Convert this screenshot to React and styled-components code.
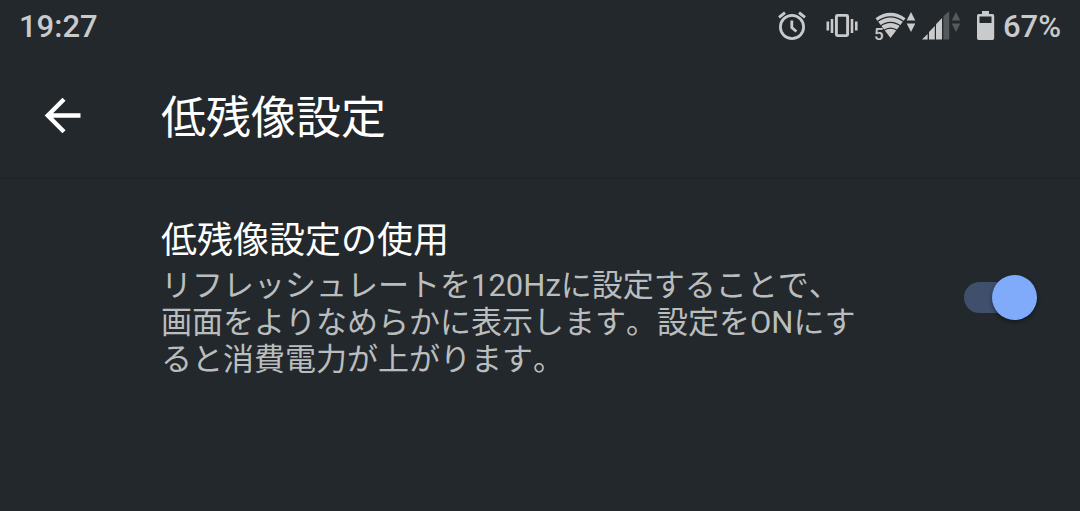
import { useState } from "react";
import styled, { createGlobalStyle } from "styled-components";

const GlobalStyle = createGlobalStyle`
  * {
    box-sizing: border-box;
  }
  body {
    margin: 0;
    background: #23282c;
    color: #fff;
    font-family: Roboto, "Noto Sans CJK JP", sans-serif;
    font-kerning: none;
  }
`;

const StatusBar = styled.div`
  display: flex;
  align-items: center;
  justify-content: space-between;
  height: 52px;
  padding: 0 19px;
  color: #c8cacb;
  font-size: 31px;
  font-weight: 500;
  line-height: 38px;
`;
const StatusText = styled.span`
  padding-top: 2px;
`;
const StatusIcons = styled.div`
  display: flex;
  align-items: center;
  svg {
    display: block;
  }
`;
const Battery = styled(StatusText)`
  margin-left: 8px;
`;

const Header = styled.header`
  display: flex;
  align-items: center;
  height: 127px;
  padding: 0 40px;
  border-bottom: 2px solid #1f2428;
`;
const BackButton = styled.button`
  display: flex;
  align-items: center;
  justify-content: center;
  width: 45px;
  height: 45px;
  margin-right: 76px;
  padding: 0;
  border: 0;
  background: none;
  color: #fff;
  cursor: pointer;
`;
const Title = styled.h1`
  margin: 0;
  padding-top: 8px;
  font-size: 45px;
  font-weight: 400;
  line-height: 54px;
`;

const SettingRow = styled.label`
  display: flex;
  align-items: center;
  gap: 104px;
  padding: 37px 43px 36px 161px;
  cursor: pointer;
`;
const SettingText = styled.span`
  flex: 1;
`;
const SettingTitle = styled.span`
  display: block;
  font-size: 36px;
  line-height: 51px;
`;
const SettingSummary = styled.span`
  display: block;
  color: #babdbe;
  font-size: 31px;
  line-height: 37px;
`;

const Switch = styled.input`
  appearance: none;
  display: grid;
  flex: none;
  align-items: center;
  width: 73px;
  height: 45px;
  margin: 0;
  cursor: pointer;

  &::before,
  &::after {
    content: "";
    grid-area: 1 / 1;
  }
  &::before {
    width: 67px;
    height: 31px;
    border-radius: 16px;
    background: #4a4f53;
  }
  &::after {
    width: 45px;
    height: 45px;
    border-radius: 50%;
    background: #bdc1c6;
    box-shadow: 0 2px 4px rgba(0, 0, 0, 0.4);
  }
  &:checked::before {
    background: #3f4f6c;
  }
  &:checked::after {
    justify-self: end;
    background: #80abfb;
  }
`;

function AlarmIcon() {
  return (
    <svg width="30" height="32" viewBox="777 10 30 32" fill="none" stroke="currentColor">
      <circle cx="792" cy="27" r="11.6" strokeWidth="2.8" />
      <path d="M791.8 20.5v7.2l4.6 3.8" strokeWidth="2.8" />
      <path d="M779 17.4l6-4.8M805 17.4l-6-4.8" strokeWidth="3" />
    </svg>
  );
}

function VibrateIcon() {
  return (
    <svg width="62" height="32" viewBox="807 10 62 32" fill="none" stroke="currentColor">
      <rect x="836.4" y="15.4" width="11.2" height="20.2" rx="1" strokeWidth="2.9" />
      <path d="M827.8 21.5v9M832 19v14M852 19v14M856.3 21.5v9" strokeWidth="2.6" />
    </svg>
  );
}

function WifiIcon() {
  return (
    <svg width="53" height="32" viewBox="869 10 53 32" overflow="visible">
      <path d="M875.5 18.2Q890.5 7.5 905.5 18.2L890.5 38z" fill="currentColor" />
      <g fill="none" stroke="#23282c" strokeWidth="1.2">
        <path d="M877 21.8q13.5-9.8 27 0" />
        <path d="M880 26.2q10.5-7.8 21 0" />
        <path d="M883.5 30.6q7-5 14 0" />
      </g>
      <path d="M873 26.5h8l3.2 5v9h-11.2z" fill="#23282c" />
      <text x="874" y="40" fill="currentColor" fontSize="17" fontWeight="500">
        5
      </text>
      <path d="M911 12l4.3 8.5h-8.6zM911 32l4.3-8.5h-8.6z" fill="currentColor" />
    </svg>
  );
}

function SignalIcon() {
  return (
    <svg width="55" height="32" viewBox="922 10 55 32">
      <g fill="currentColor">
        <path d="M922 39.5l5.6-5.6v5.6z" />
        <path d="M929 39.5v-7.6l5.8-5.9v13.5z" />
        <path d="M936 39.5V24.2l6-6.2v21.5z" />
      </g>
      <g fill="#54595c">
        <path d="M943.4 39.5V16.2l5.8-5v28.3z" />
        <path d="M956 12l4.3 8.5h-8.6zM956 32l4.3-8.5h-8.6z" />
      </g>
    </svg>
  );
}

function BatteryIcon() {
  return (
    <svg width="18" height="32" viewBox="977 10 18 32">
      <path
        d="M982 11h7v3h3.5a1.7 1.7 0 0 1 1.7 1.7v22.6a1.7 1.7 0 0 1-1.7 1.7h-13.8a1.7 1.7 0 0 1-1.7-1.7V15.7a1.7 1.7 0 0 1 1.7-1.7H982z"
        fill="currentColor"
      />
      <path d="M979.5 16.5h12v6.5h-12z" fill="#23282c" />
    </svg>
  );
}

function ArrowBackIcon() {
  return (
    <svg width="45" height="45" viewBox="0 0 45 45" fill="none" stroke="currentColor" strokeWidth="4.4">
      <path d="M40.5 23.5H8.5M24 7.3L7.8 23.5L24 39.7" />
    </svg>
  );
}

export default function App() {
  const [enabled, setEnabled] = useState(true);

  return (
    <div lang="ja">
      <GlobalStyle />
      <StatusBar>
        <StatusText>19:27</StatusText>
        <StatusIcons>
          <AlarmIcon />
          <VibrateIcon />
          <WifiIcon />
          <SignalIcon />
          <BatteryIcon />
          <Battery>67%</Battery>
        </StatusIcons>
      </StatusBar>
      <Header>
        <BackButton type="button" aria-label="戻る">
          <ArrowBackIcon />
        </BackButton>
        <Title>低残像設定</Title>
      </Header>
      <main>
        <SettingRow>
          <SettingText>
            <SettingTitle>低残像設定の使用</SettingTitle>
            <SettingSummary>
              リフレッシュレートを120Hzに設定することで、画面をよりなめらかに表示します。設定をONにすると消費電力が上がります。
            </SettingSummary>
          </SettingText>
          <Switch
            type="checkbox"
            checked={enabled}
            onChange={(e) => setEnabled(e.target.checked)}
          />
        </SettingRow>
      </main>
    </div>
  );
}
